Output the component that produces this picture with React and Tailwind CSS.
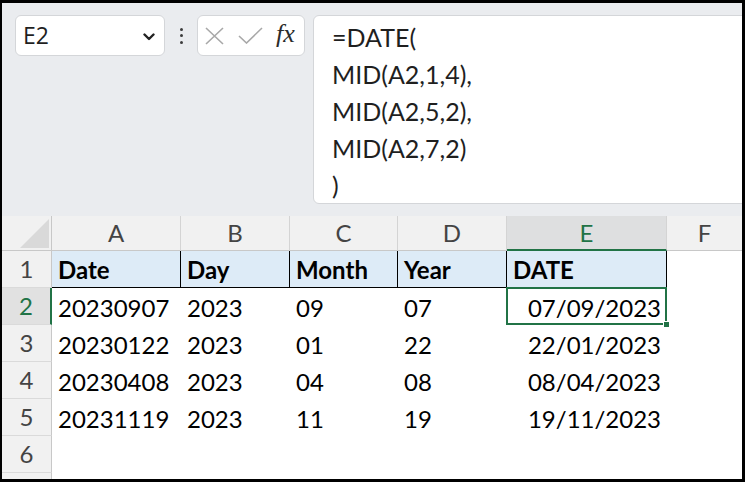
import React from 'react';

const rows = [
  ['20230907', '2023', '09', '07', '07/09/2023'],
  ['20230122', '2023', '01', '22', '22/01/2023'],
  ['20230408', '2023', '04', '08', '08/04/2023'],
  ['20231119', '2023', '11', '19', '19/11/2023'],
];

const formula = ['=DATE(', 'MID(A2,1,4),', 'MID(A2,5,2),', 'MID(A2,7,2)', ')'];

const grid = "font-['Lato','Liberation_Sans',sans-serif] text-[24px]";

function Toolbar() {
  return (
    <div className="h-[213px] shrink-0 flex items-start pt-[12px] pl-[13px] bg-[#eaecef] overflow-hidden">
      {/* name box */}
      <div className="w-[150px] h-[41px] flex items-center justify-between pl-[7px] pr-[9px] bg-white border border-[#d4d6d9] rounded-[6px]">
        <span className="font-['Open_Sans',sans-serif] text-[23px] text-[#1f1f1f] leading-none">E2</span>
        <svg width="12" height="8" viewBox="0 0 12 8" className="mt-[3px]">
          <path d="M1.5 1.5 L6 6 L10.5 1.5" fill="none" stroke="#222" strokeWidth="2.4" strokeLinecap="round" strokeLinejoin="round" />
        </svg>
      </div>

      {/* kebab */}
      <div className="w-[32px] h-[41px] flex flex-col items-center justify-center gap-[3.5px]">
        <div className="w-[3px] h-[3px] rounded-full bg-[#3c3c3c]" />
        <div className="w-[3px] h-[3px] rounded-full bg-[#3c3c3c]" />
        <div className="w-[3px] h-[3px] rounded-full bg-[#3c3c3c]" />
      </div>

      {/* cancel / enter / fx */}
      <div className="w-[108px] h-[41px] flex items-center pl-[7px] bg-white border border-[#d4d6d9] rounded-[6px]">
        <svg width="19" height="18" viewBox="0 0 19 18">
          <path d="M1 1 L18 17 M18 1 L1 17" stroke="#a8a8a8" strokeWidth="1.6" fill="none" />
        </svg>
        <svg width="25" height="17" viewBox="0 0 25 17" className="ml-[14px]">
          <path d="M1 9 L8.5 16 L24 1" stroke="#a8a8a8" strokeWidth="1.6" fill="none" />
        </svg>
        <span className="ml-[13px] font-['Liberation_Serif',serif] italic text-[26px] leading-none text-[#2b2b2b] -mt-[3px]">fx</span>
      </div>

      {/* formula bar */}
      <div className="ml-[8px] flex-1 -mr-[20px] h-[189px] bg-white border border-[#d4d6d9] rounded-[6px] pl-[18px] pt-[3px]">
        {formula.map((l, i) => (
          <div key={i} className="font-['Lato','Liberation_Sans',sans-serif] text-[25px] leading-[37px] text-[#1f1f1f]">{l}</div>
        ))}
      </div>
    </div>
  );
}

function ColHead({ label, active, last }) {
  return (
    <div
      className={`flex items-center justify-center ${grid} leading-none ${
        active
          ? 'bg-[#dedfe0] text-[#217346] border-b-2 border-[#217346]'
          : 'text-[#444] border-b border-[#c8c8c8]'
      } ${last ? '' : 'border-r border-r-[#d4d4d4]'}`}
    >
      {label}
    </div>
  );
}

function RowHead({ n, active }) {
  return (
    <div
      className={`flex items-center justify-center ${grid} leading-none border-b border-[#dadada] ${
        active
          ? 'bg-[#e1e1e1] text-[#217346] border-r-2 border-r-[#217346]'
          : 'text-[#444] border-r border-r-[#c8c8c8]'
      }`}
    >
      {n}
    </div>
  );
}

export default function App() {
  return (
    <div className="w-[745px] h-[482px] bg-black pt-[3px] pl-[2px] pr-[3px] pb-[3px]">
      <div className="w-full h-full flex flex-col overflow-hidden bg-[#f1f1f1]">
        <Toolbar />
        <div className="shrink-0 grid grid-cols-[50px_129px_109px_108px_109px_160px_1fr] grid-rows-[35px_37px_37px_37px_37px_37px_37px_37px]">
          {/* corner */}
          <div className="flex items-end justify-end pr-[2px] pb-[2px] border-r border-b border-[#c8c8c8]">
            <svg width="29" height="29" viewBox="0 0 29 29">
              <polygon points="29,0 29,29 0,29" fill="#d9d9d9" />
            </svg>
          </div>
          <ColHead label="A" />
          <ColHead label="B" />
          <ColHead label="C" />
          <ColHead label="D" />
          <ColHead label="E" active />
          <ColHead label="F" last />

          <RowHead n="1" />
          {['Date', 'Day', 'Month', 'Year', 'DATE'].map((h) => (
            <div
              key={h}
              className={`flex items-center pl-[6px] pt-[2px] bg-[#ddebf7] border-r border-b border-black ${grid} font-bold text-black leading-none`}
            >
              {h}
            </div>
          ))}
          <div className="bg-white" />

          {rows.map((r, ri) => (
            <React.Fragment key={ri}>
              <RowHead n={String(ri + 2)} active={ri === 0} />
              {r.slice(0, 4).map((v, ci) => (
                <div key={ci} className={`flex items-center pl-[6px] pt-[2px] bg-white ${grid} text-black leading-none`}>
                  {v}
                </div>
              ))}
              <div className={`relative flex items-center justify-end pr-[6px] pt-[2px] bg-white ${grid} text-black leading-none`}>
                {r[4]}
                {ri === 0 && (
                  <>
                    <div className="absolute -left-[1px] -top-[1px] right-0 bottom-0 border-2 border-[#217346]" />
                    <div className="absolute -right-[3px] -bottom-[3px] z-10 w-[7px] h-[7px] bg-[#217346] border border-white" />
                  </>
                )}
              </div>
              <div className="bg-white" />
            </React.Fragment>
          ))}

          <RowHead n="6" />
          <div className="col-span-6 bg-white" />
          <RowHead n="" />
          <div className="col-span-6 bg-white" />
        </div>
      </div>
    </div>
  );
}
